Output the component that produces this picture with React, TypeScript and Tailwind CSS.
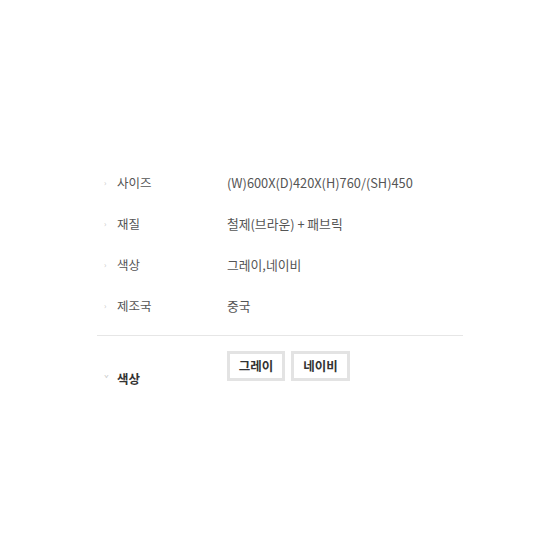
export default function App() {
  const rows = [
    { label: "사이즈", value: "(W)600X(D)420X(H)760/(SH)450" },
    { label: "재질", value: "철제(브라운) + 패브릭" },
    { label: "색상", value: "그레이,네이비" },
    { label: "제조국", value: "중국" },
  ];

  return (
    <div
      className="w-[550px] h-[550px] bg-white pt-[172px]"
      style={{ fontFamily: "'Noto Sans CJK KR', 'Noto Sans', sans-serif" }}
    >
      <div className="ml-[97px] w-[366px]">
        {/* spec rows */}
        <div className="flex flex-col gap-[19px] pb-[18px]">
          {rows.map((r) => (
            <div key={r.label} className="flex items-center h-[22px] text-[12.5px] text-[#555]">
              <span className="w-[20px] pl-[7px] text-[8px] text-[#c8c8c8]">›</span>
              <span className="w-[110px]">{r.label}</span>
              <span className="text-[12.8px]">{r.value}</span>
            </div>
          ))}
        </div>
        <div className="h-px bg-[#e6e6e6]" />

        {/* option */}
        <div className="flex pt-[15px]">
          <div className="flex items-center w-[130px] h-[22px] mt-[17px]">
            <span className="w-[20px] pl-[7px] text-[8px] leading-none text-[#c8c8c8]">ˇ</span>
            <span className="text-[12.5px] font-bold text-[#333]">색상</span>
          </div>
          <div className="flex gap-[6px] items-start h-[44px]">
            <button className="w-[58px] h-[30px] border-[3px] border-[#e3e3e3] bg-white text-[12.5px] font-bold text-[#333]">
              그레이
            </button>
            <button className="w-[59px] h-[30px] border-[3px] border-[#e3e3e3] bg-white text-[12.5px] font-bold text-[#333]">
              네이비
            </button>
          </div>
        </div>
      </div>
    </div>
  );
}
